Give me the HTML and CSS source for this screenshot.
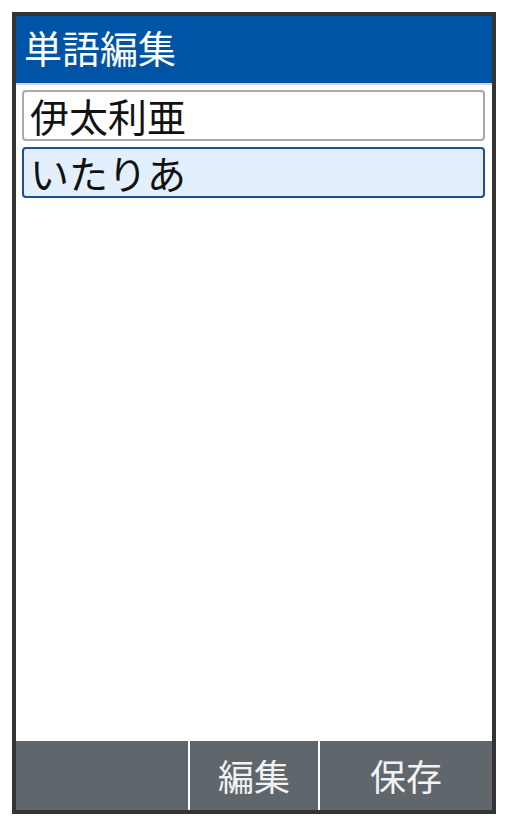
FILE: index.html
```html
<!DOCTYPE html>
<html lang="ja">
<head>
    <meta charset="UTF-8">
    <meta name="viewport" content="width=device-width, initial-scale=1.0">
    <title>単語編集</title>
    <link rel="stylesheet" href="styles.css">
</head>
<body>
    <div class="phone">
        <div class="title-bar">単語編集</div>

        <div class="content">
            <div class="field">伊太利亜</div>
            <div class="field selected">いたりあ</div>
        </div>

        <div class="soft-keys">
            <div class="key"></div>
            <div class="key">編集</div>
            <div class="key">保存</div>
        </div>
    </div>
</body>
</html>
```

FILE: styles.css
```css
body {
    margin: 0;
    background: #fff;
    font-family: "Noto Sans CJK JP", "Noto Sans", sans-serif;
}
.phone {
    margin: 12px;
    width: 484px;
    height: 802px;
    border: 4px solid #343434;
    box-sizing: border-box;
    display: flex;
    flex-direction: column;
    background: #fff;
}
.title-bar {
    height: 67px;
    background-color: #0054a6;
    color: #fff;
    font-size: 38px;
    line-height: 62px;
    padding-left: 8px;
    border-bottom: 2px solid #d6d6d6;
}
.content {
    flex: 1;
    padding: 5px 7px 0 6px;
    display: flex;
    flex-direction: column;
    gap: 6px;
}
.field {
    height: 51px;
    box-sizing: border-box;
    border: 2px solid #a9a9a9;
    border-radius: 4px;
    font-size: 39px;
    line-height: 46px;
    padding-left: 6px;
    color: #111;
}
.field.selected {
    background-color: #e3f0fc;
    border-color: #1b4f98;
}
.soft-keys {
    height: 69px;
    display: flex;
    background-color: #5f676d;
}
.key {
    color: #f2f2f2;
    font-size: 36px;
    line-height: 69px;
    text-align: center;
}
.key:nth-child(1) {
    width: 172px;
}
.key:nth-child(2) {
    width: 128px;
    border-left: 2px solid #fff;
    border-right: 2px solid #fff;
}
.key:nth-child(3) {
    flex: 1;
}
```
